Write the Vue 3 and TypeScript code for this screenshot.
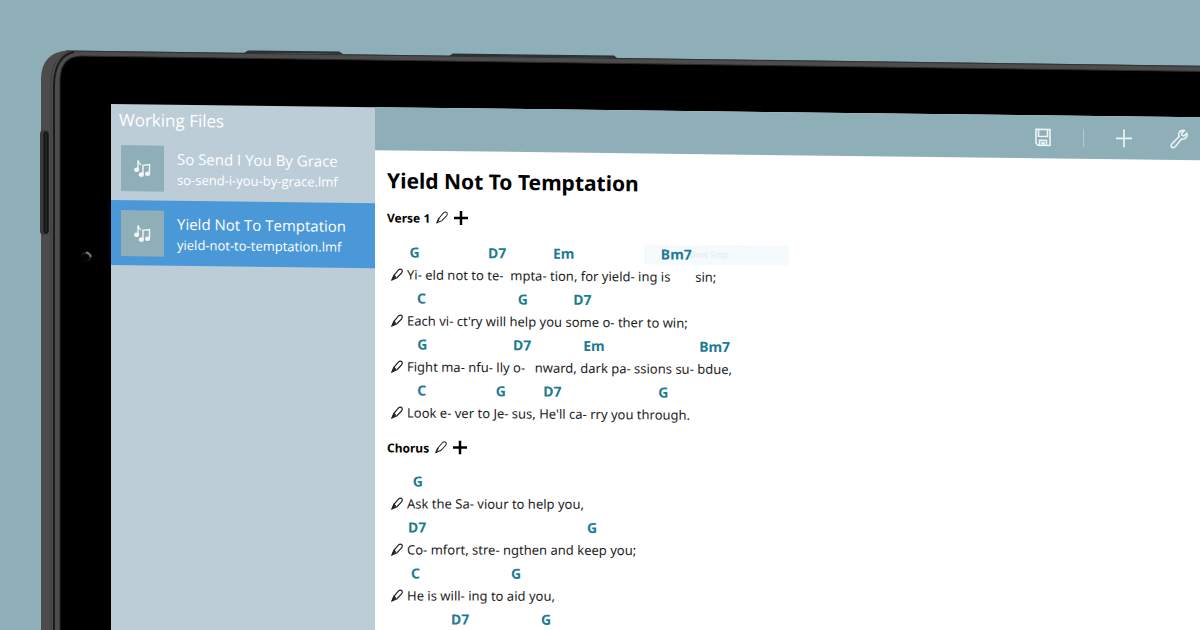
<script setup lang="ts">
interface Syllable {
  text: string
  chord?: string
}

interface Section {
  name: string
  lines: Syllable[][]
}

const files = [
  { title: 'So Send I You By Grace', file: 'so-send-i-you-by-grace.lmf', active: false },
  { title: 'Yield Not To Temptation', file: 'yield-not-to-temptation.lmf', active: true },
]

// Each part is "text" or "text|chord"; spaces in the text keep the word gaps.
const parse = (parts: string[]): Syllable[] =>
  parts.map((part) => {
    const [text, chord] = part.split('|')
    return { text, chord }
  })

const sections: Section[] = [
  {
    name: 'Verse 1',
    lines: [
      parse(['Yi-|G', ' eld not to ', 'te- |D7', ' mpta- ', 'tion,|Em', ' for yield- ing ', 'is|Bm7', ' sin;']),
      parse(['Each|C', " vi- ct'ry will ", 'help|G', ' you ', 'some|D7', ' o- ther to win;']),
      parse(['Fight|G', ' ma- nfu- lly ', 'o- |D7', ' nward, ', 'dark|Em', ' pa- ssions su- ', 'bdue,|Bm7']),
      parse(['Look|C', ' e- ver to ', 'Je-|G', ' sus, ', "He'll|D7", ' ca- rry you ', 'through.|G']),
    ],
  },
  {
    name: 'Chorus',
    lines: [
      parse(['Ask|G', ' the Sa- viour to help you,']),
      parse(['Co-|D7', ' mfort, stre- ngthen and ', 'keep|G', ' you;']),
      parse(['He|C', ' is will- ing to ', 'aid|G', ' you,']),
      parse(['He will ', 'ca-|D7', ' rry you ', 'through.|G']),
    ],
  },
]
</script>

<template>
  <div class="scene">
    <svg class="chassis" aria-hidden="true">
      <path d="M41 2000V78Q42 52 68 50.500L2400 82V2000Z" fill="#4c4c4c" />
      <path d="M66 51L2400 82.500" fill="none" stroke="#2f3334" />
      <path d="M244 53L248 50.500L339 51.500L343 54Z M449 56L453 53.500L614 55.500L617 58Z" fill="#2b3133" />
      <path d="M51 2000V82Q52 54 72 52" fill="none" stroke="#3c3c3c" />
      <path d="M54 2000V84Q55 56 74 52" fill="none" stroke="#1c1c1c" stroke-width="2" />
      <path d="M60 2000V78Q61 57 80 56L2400 88V2000Z" fill="#000" stroke="#2a2a2a" />
      <rect x="40" y="130" width="9" height="105" rx="4" fill="#3a3a3a" />
      <rect x="44" y="132" width="4" height="101" rx="2" fill="#202020" stroke="#0c0c0c" />
      <circle cx="86" cy="257" r="5" fill="#242424" />
      <circle cx="85" cy="258" r="4" fill="#050505" />
      <path d="M86 252.500Q90 253 91 257" fill="none" stroke="#777" stroke-width="2" />
    </svg>

    <main class="screen">
      <nav class="sidebar" aria-label="Working files">
        <h2>Working Files</h2>
        <button v-for="f in files" :key="f.file" type="button" class="file" :class="{ active: f.active }">
          <span class="thumb">
            <svg width="17" height="18" viewBox="0 0 17 18" fill="none" stroke="#f2f7f8" stroke-width="1.400">
              <path d="M4 10V1Q4.500 4 7 5.500M9 15V6L15.500 5V14" />
              <ellipse cx="2.600" cy="10.500" rx="1.900" ry="1.600" fill="#f2f7f8" />
              <ellipse cx="7.300" cy="15.300" rx="1.900" ry="1.600" fill="#f2f7f8" />
              <ellipse cx="13.600" cy="14.300" rx="1.900" ry="1.600" fill="#f2f7f8" />
            </svg>
          </span>
          <span class="names">
            <span class="name">{{ f.title }}</span>
            <span class="path">{{ f.file }}</span>
          </span>
        </button>
      </nav>

      <section class="editor">
        <header class="toolbar">
          <button type="button" aria-label="Save">
            <svg width="18" height="20" viewBox="0 0 18 20" fill="none" stroke="#eef5f7" stroke-width="1.600">
              <path d="M2 2H16V18H4L2 16ZM4.500 2V9H13.500V2M5.500 18V13H12.500V18M8 18V15.500H10V18" />
            </svg>
          </button>
          <span class="divider"></span>
          <button type="button" aria-label="Add">
            <svg width="18" height="20" viewBox="0 0 18 20" fill="none" stroke="#eef5f7" stroke-width="1.700">
              <path d="M1 10H17M9 1V19" />
            </svg>
          </button>
          <button type="button" class="tools" aria-label="Settings">
            <svg width="18" height="20" viewBox="0 0 18 20" fill="none" stroke="#eef5f7" stroke-width="1.500">
              <path d="M14.500 1.500Q10.500 .5 9 4Q8.500 6 9.200 7.500L1.800 15Q.5 17 2 18.300Q3.800 19.300 5.200 17.800L11.500 10Q15 10.500 16.700 7.800Q17.500 6 16.800 4L14 7L11.800 6L12 3.800Z" />
            </svg>
          </button>
        </header>

        <article class="song">
          <h1>Yield Not To Temptation</h1>
          <section v-for="(s, i) in sections" :key="s.name" class="part" :class="{ lower: i > 0 }">
            <div v-if="i === 0" class="ghost" aria-hidden="true">dow Snip</div>
            <h3>
              {{ s.name }}
              <button type="button" :aria-label="`Edit ${s.name}`">
                <svg class="nib" width="12" height="14" viewBox="0 0 12 14" fill="none" stroke="#222">
                  <path d="M1 12L3 7.500L7.500 2Q9.500 .5 11 2Q11.700 3.500 10.500 5L6 9.800Z" />
                  <path d="M1 12L3 7.500" stroke-width="1.500" />
                </svg>
              </button>
              <button type="button" :aria-label="`Add line to ${s.name}`">
                <svg class="nib" width="14" height="14" viewBox="0 0 14 14" stroke="#000" stroke-width="2.500"><path d="M0 7H14M7 0V14" /></svg>
              </button>
            </h3>
            <div v-for="(line, n) in s.lines" :key="n" class="line">
              <button type="button" class="pen" aria-label="Edit line">
                <svg width="12" height="14" viewBox="0 0 12 14" fill="none" stroke="#222" stroke-width="1.200">
                  <path d="M1 12.500L3 8L7.500 2.500Q9.500 1 11 2.500Q11.700 4 10.500 5.500L6 10.300Z" />
                  <path d="M1 12.500L3 8L4.500 9.500Z" fill="#222" />
                </svg>
              </button>
              <span v-for="(syl, k) in line" :key="k" class="syl">
                <b>{{ syl.chord }}</b>
                <span>{{ syl.text }}</span>
              </span>
            </div>
          </section>
        </article>
      </section>
    </main>
  </div>
</template>

<style>
body {
  margin: 0;
}
</style>

<style scoped>
.scene {
  position: relative;
  box-sizing: border-box;
  height: 100vh;
  padding: 104px 0 0 111px;
  overflow: hidden;
  background: #8fafb8;
  font-family: "Noto Sans", "Open Sans", sans-serif;
}
.chassis {
  position: absolute;
  inset: 0;
  width: 100%;
  height: 100%;
}
button {
  padding: 0;
  border: 0;
  background: none;
  color: inherit;
  font: inherit;
}
svg {
  display: block;
}
.screen {
  position: relative;
  display: flex;
  height: 100%;
  transform: skewY(0.7deg);
  transform-origin: 0 0;
}
.sidebar {
  flex: none;
  width: 264px;
  background: #bccdd8;
  color: #fff;
  font-family: "Open Sans", sans-serif;
}
.sidebar h2 {
  margin: 0;
  padding-left: 8px;
  font-size: 17px;
  font-weight: 400;
  line-height: 31px;
}
.file {
  display: flex;
  align-items: center;
  gap: 13px;
  width: 100%;
  height: 65px;
  padding-left: 10px;
  text-align: left;
}
.file.active {
  background: #4a98d8;
}
.thumb {
  display: grid;
  place-items: center;
  width: 43px;
  height: 46px;
  background: #8fafb8;
}
.name,
.path {
  display: block;
  white-space: nowrap;
}
.name {
  font-size: 15px;
  line-height: 22px;
}
.path {
  font-size: 13px;
  line-height: 20px;
}
.editor {
  flex: 1;
  background: #fff;
}
.toolbar {
  display: flex;
  align-items: center;
  justify-content: flex-end;
  height: 43px;
  gap: 31px;
  padding-right: 12px;
  background: #8fafb8;
}
.tools {
  margin-left: 6px;
}
.divider {
  width: 1px;
  height: 18px;
  background: #b4cad0;
}
.song {
  padding: 15px 12px;
}
h1 {
  margin: 0;
  font-size: 21px;
  line-height: 30px;
}
.part {
  position: relative;
  transform: skewY(-0.25deg);
  transform-origin: 0 0;
}
.lower {
  padding-top: 1px;
  transform: skewY(-0.55deg);
}
h3 {
  display: flex;
  align-items: center;
  gap: 6px;
  margin: 13px 0 12px;
  font-size: 12px;
  line-height: 20px;
}
.lower h3 {
  margin-bottom: 11px;
}
.nib {
  margin-bottom: 2px;
}
.line {
  position: relative;
  display: flex;
  align-items: flex-end;
  color: #1c1c1c;
  font-size: 13px;
  line-height: 23px;
}
.pen {
  padding: 0 4px 5px;
}
.syl {
  display: grid;
  justify-items: center;
  white-space: pre;
}
.syl b {
  height: 23px;
  color: #1d7b92;
  font-size: 14px;
}
.syl span {
  justify-self: start;
}
.ghost {
  position: absolute;
  top: 34px;
  left: 257px;
  width: 145px;
  height: 20px;
  background: #f5fafd;
  color: #e6eaec;
  font-size: 9px;
  line-height: 20px;
  text-indent: 46px;
}
</style>
